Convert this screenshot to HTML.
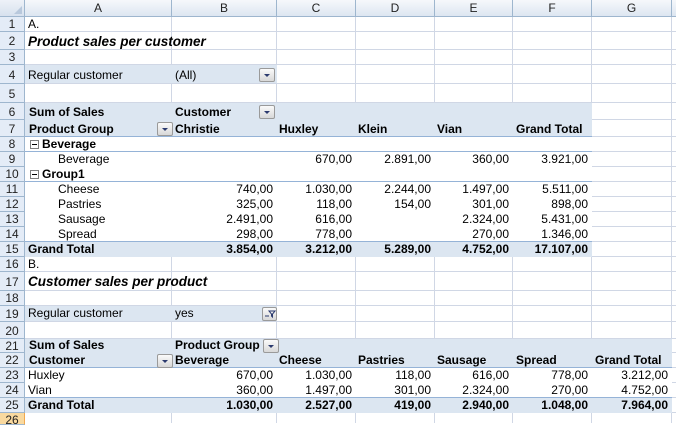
<!DOCTYPE html>
<html><head><meta charset="utf-8"><style>
*{margin:0;padding:0;box-sizing:border-box}
body{width:676px;height:423px;overflow:hidden;background:#fff;position:relative;font-family:"Liberation Sans",Arial,sans-serif;font-size:12px;color:#000}
div{position:absolute}
.v{width:1px;top:17px;height:406px;background:#d0d7e5}
.h{height:1px;left:25px;width:651px;background:#d0d7e5}
.bl{background:#dce6f1}
.wh{background:#fff}
.pl{height:1px;background:#95b3d7}
.t{line-height:15px;white-space:nowrap}
.b{font-weight:bold}
.ch{top:0;height:17px;background:linear-gradient(#f6f8fb,#dde6f1);border-right:1px solid #9eb6ce;border-bottom:1px solid #9eb6ce;text-align:center;line-height:17px;color:#222}
.rh{left:0;width:25px;background:#e4ecf7;border-right:1px solid #9eb6ce;border-bottom:1px solid #9eb6ce;text-align:center;color:#222;font-size:12px}
.dd{width:16px;height:14px;border:1px solid #9a9a9a;border-radius:2px;background:linear-gradient(#fafafa,#d8d8d8)}
.dd:after{content:"";position:absolute;left:4px;top:5px;border-left:3px solid transparent;border-right:3px solid transparent;border-top:3px solid #2b3a6e}
.cb{width:9px;height:9px;border:1px solid #7f7f7f;background:#fff}
.cb:after{content:"";position:absolute;left:1px;top:3px;width:5px;height:1px;background:#000}
</style></head><body>
<!-- gridlines -->
<div class="v" style="left:171px"></div><div class="v" style="left:276px"></div><div class="v" style="left:355px"></div><div class="v" style="left:434px"></div><div class="v" style="left:512px"></div><div class="v" style="left:591px"></div><div class="v" style="left:671px"></div>
<div class="h" style="top:31px"></div><div class="h" style="top:49px"></div><div class="h" style="top:64px"></div><div class="h" style="top:83px"></div><div class="h" style="top:102px"></div><div class="h" style="top:119px"></div><div class="h" style="top:136px"></div><div class="h" style="top:151px"></div><div class="h" style="top:166px"></div><div class="h" style="top:181px"></div><div class="h" style="top:196px"></div><div class="h" style="top:211px"></div><div class="h" style="top:226px"></div><div class="h" style="top:241px"></div><div class="h" style="top:256px"></div><div class="h" style="top:271px"></div><div class="h" style="top:290px"></div><div class="h" style="top:305px"></div><div class="h" style="top:321px"></div><div class="h" style="top:338px"></div><div class="h" style="top:352px"></div><div class="h" style="top:367px"></div><div class="h" style="top:382px"></div><div class="h" style="top:397px"></div><div class="h" style="top:412px"></div>
<!-- pivot fills -->
<div class="bl" style="left:25px;top:65px;width:252px;height:18px"></div>
<div class="bl" style="left:25px;top:103px;width:567px;height:34px"></div>
<div class="wh" style="left:25px;top:137px;width:567px;height:105px"></div>
<div class="bl" style="left:25px;top:242px;width:567px;height:15px"></div>
<div class="pl" style="left:25px;top:136px;width:567px"></div>
<div class="pl" style="left:25px;top:151px;width:567px"></div>
<div class="pl" style="left:25px;top:181px;width:567px"></div>
<div class="pl" style="left:25px;top:241px;width:567px"></div>
<div class="bl" style="left:25px;top:306px;width:252px;height:15px"></div>
<div class="bl" style="left:25px;top:339px;width:647px;height:29px"></div>
<div class="wh" style="left:25px;top:368px;width:647px;height:30px"></div>
<div class="bl" style="left:25px;top:398px;width:647px;height:15px"></div>
<div class="pl" style="left:25px;top:367px;width:647px"></div>
<div class="pl" style="left:25px;top:397px;width:647px"></div>
<!-- headers -->
<div class="ch" style="left:0;width:25px;background:linear-gradient(#eef2f8,#d7e1ee)"><div style="right:2px;bottom:2px;border-left:8px solid transparent;border-bottom:8px solid #b8c8dc"></div></div>
<div class="ch" style="left:25px;width:147px">A</div>
<div class="ch" style="left:172px;width:105px">B</div>
<div class="ch" style="left:277px;width:79px">C</div>
<div class="ch" style="left:356px;width:79px">D</div>
<div class="ch" style="left:435px;width:78px">E</div>
<div class="ch" style="left:513px;width:79px">F</div>
<div class="ch" style="left:592px;width:80px">G</div>
<div class="ch" style="left:672px;width:10px"></div>
<div class="rh" style="top:17px;height:15px;line-height:15px">1</div>
<div class="rh" style="top:32px;height:18px;line-height:19px">2</div>
<div class="rh" style="top:50px;height:15px;line-height:15px">3</div>
<div class="rh" style="top:65px;height:19px;line-height:20px">4</div>
<div class="rh" style="top:84px;height:19px;line-height:20px">5</div>
<div class="rh" style="top:103px;height:17px;line-height:18px">6</div>
<div class="rh" style="top:120px;height:17px;line-height:18px">7</div>
<div class="rh" style="top:137px;height:15px;line-height:15px">8</div>
<div class="rh" style="top:152px;height:15px;line-height:15px">9</div>
<div class="rh" style="top:167px;height:15px;line-height:15px">10</div>
<div class="rh" style="top:182px;height:15px;line-height:15px">11</div>
<div class="rh" style="top:197px;height:15px;line-height:15px">12</div>
<div class="rh" style="top:212px;height:15px;line-height:15px">13</div>
<div class="rh" style="top:227px;height:15px;line-height:15px">14</div>
<div class="rh" style="top:242px;height:15px;line-height:15px">15</div>
<div class="rh" style="top:257px;height:15px;line-height:15px">16</div>
<div class="rh" style="top:272px;height:19px;line-height:20px">17</div>
<div class="rh" style="top:291px;height:15px;line-height:15px">18</div>
<div class="rh" style="top:306px;height:16px;line-height:16px">19</div>
<div class="rh" style="top:322px;height:17px;line-height:18px">20</div>
<div class="rh" style="top:339px;height:14px;line-height:14px">21</div>
<div class="rh" style="top:353px;height:15px;line-height:15px">22</div>
<div class="rh" style="top:368px;height:15px;line-height:15px">23</div>
<div class="rh" style="top:383px;height:15px;line-height:15px">24</div>
<div class="rh" style="top:398px;height:15px;line-height:15px">25</div>
<div class="rh" style="top:413px;height:12px;line-height:14px;background:#f9d99f;border-right-color:#f2a94e">26</div>
<!-- section A -->
<div class="t" style="left:28px;top:17px">A.</div>
<div class="t b" style="left:28px;top:34px;font-style:italic;font-size:13.5px">Product sales per customer</div>
<div class="t" style="left:28px;top:68px">Regular customer</div>
<div class="t" style="left:175px;top:68px">(All)</div>
<div class="dd" style="left:259px;top:68px"></div>
<div class="t b" style="left:29px;top:105px">Sum of Sales</div>
<div class="t b" style="left:175px;top:105px">Customer</div>
<div class="dd" style="left:259px;top:105px"></div>
<div class="t b" style="left:29px;top:122px">Product Group</div>
<div class="dd" style="left:157px;top:122px"></div>
<div class="t b" style="left:175px;top:122px">Christie</div>
<div class="t b" style="left:279px;top:122px">Huxley</div>
<div class="t b" style="left:358px;top:122px">Klein</div>
<div class="t b" style="left:437px;top:122px">Vian</div>
<div class="t b" style="left:516px;top:122px">Grand Total</div>
<div class="cb" style="left:30px;top:140px"></div>
<div class="t b" style="left:42px;top:137px">Beverage</div>
<div class="t" style="left:58px;top:152px">Beverage</div>
<div class="t" style="right:324px;top:152px">670,00</div>
<div class="t" style="right:245px;top:152px">2.891,00</div>
<div class="t" style="right:167px;top:152px">360,00</div>
<div class="t" style="right:88px;top:152px">3.921,00</div>
<div class="cb" style="left:30px;top:170px"></div>
<div class="t b" style="left:42px;top:167px">Group1</div>
<div class="t" style="left:58px;top:182px">Cheese</div>
<div class="t" style="right:403px;top:182px">740,00</div>
<div class="t" style="right:324px;top:182px">1.030,00</div>
<div class="t" style="right:245px;top:182px">2.244,00</div>
<div class="t" style="right:167px;top:182px">1.497,00</div>
<div class="t" style="right:88px;top:182px">5.511,00</div>
<div class="t" style="left:58px;top:197px">Pastries</div>
<div class="t" style="right:403px;top:197px">325,00</div>
<div class="t" style="right:324px;top:197px">118,00</div>
<div class="t" style="right:245px;top:197px">154,00</div>
<div class="t" style="right:167px;top:197px">301,00</div>
<div class="t" style="right:88px;top:197px">898,00</div>
<div class="t" style="left:58px;top:212px">Sausage</div>
<div class="t" style="right:403px;top:212px">2.491,00</div>
<div class="t" style="right:324px;top:212px">616,00</div>
<div class="t" style="right:167px;top:212px">2.324,00</div>
<div class="t" style="right:88px;top:212px">5.431,00</div>
<div class="t" style="left:58px;top:227px">Spread</div>
<div class="t" style="right:403px;top:227px">298,00</div>
<div class="t" style="right:324px;top:227px">778,00</div>
<div class="t" style="right:167px;top:227px">270,00</div>
<div class="t" style="right:88px;top:227px">1.346,00</div>
<div class="t b" style="left:28px;top:242px">Grand Total</div>
<div class="t b" style="right:403px;top:242px">3.854,00</div>
<div class="t b" style="right:324px;top:242px">3.212,00</div>
<div class="t b" style="right:245px;top:242px">5.289,00</div>
<div class="t b" style="right:167px;top:242px">4.752,00</div>
<div class="t b" style="right:88px;top:242px">17.107,00</div>
<!-- section B -->
<div class="t" style="left:28px;top:257px">B.</div>
<div class="t b" style="left:28px;top:274px;font-style:italic;font-size:13.5px">Customer sales per product</div>
<div class="t" style="left:28px;top:306px">Regular customer</div>
<div class="t" style="left:175px;top:306px">yes</div>
<div style="left:262px;top:307px;width:15px;height:14px;border:1px solid #9a9a9a;border-radius:2px;background:linear-gradient(#fafafa,#d8d8d8)"><svg width="13" height="12" style="position:absolute;left:0;top:0"><path d="M2 8h4M6 3h6l-2.5 3v3l-1 -1v-2z" fill="none" stroke="#2b3a6e" stroke-width="1"/></svg></div>
<div class="t b" style="left:29px;top:338px">Sum of Sales</div>
<div class="t b" style="left:175px;top:338px">Product Group</div>
<div class="dd" style="left:263px;top:339px"></div>
<div class="t b" style="left:29px;top:353px">Customer</div>
<div class="dd" style="left:157px;top:354px"></div>
<div class="t b" style="left:175px;top:353px">Beverage</div>
<div class="t b" style="left:279px;top:353px">Cheese</div>
<div class="t b" style="left:358px;top:353px">Pastries</div>
<div class="t b" style="left:437px;top:353px">Sausage</div>
<div class="t b" style="left:516px;top:353px">Spread</div>
<div class="t b" style="left:595px;top:353px">Grand Total</div>
<div class="t" style="left:28px;top:368px">Huxley</div>
<div class="t" style="right:403px;top:368px">670,00</div>
<div class="t" style="right:324px;top:368px">1.030,00</div>
<div class="t" style="right:245px;top:368px">118,00</div>
<div class="t" style="right:167px;top:368px">616,00</div>
<div class="t" style="right:88px;top:368px">778,00</div>
<div class="t" style="right:8px;top:368px">3.212,00</div>
<div class="t" style="left:28px;top:383px">Vian</div>
<div class="t" style="right:403px;top:383px">360,00</div>
<div class="t" style="right:324px;top:383px">1.497,00</div>
<div class="t" style="right:245px;top:383px">301,00</div>
<div class="t" style="right:167px;top:383px">2.324,00</div>
<div class="t" style="right:88px;top:383px">270,00</div>
<div class="t" style="right:8px;top:383px">4.752,00</div>
<div class="t b" style="left:28px;top:398px">Grand Total</div>
<div class="t b" style="right:403px;top:398px">1.030,00</div>
<div class="t b" style="right:324px;top:398px">2.527,00</div>
<div class="t b" style="right:245px;top:398px">419,00</div>
<div class="t b" style="right:167px;top:398px">2.940,00</div>
<div class="t b" style="right:88px;top:398px">1.048,00</div>
<div class="t b" style="right:8px;top:398px">7.964,00</div>
</body></html>
